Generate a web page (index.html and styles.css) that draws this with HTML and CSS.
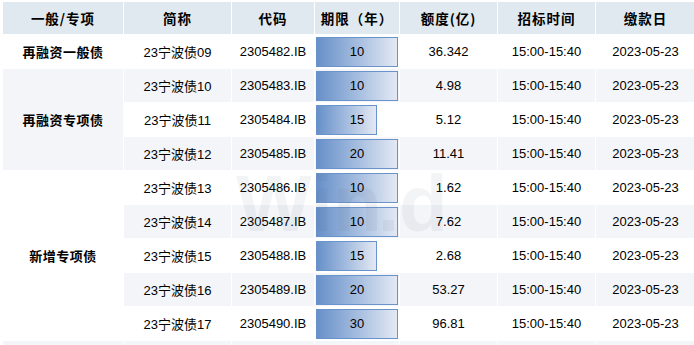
FILE: index.html
```html
<!DOCTYPE html>
<html lang="zh-CN">
<head>
<meta charset="utf-8">
<title>债券发行</title>
<link rel="stylesheet" href="styles.css">
</head>
<body>
<div class="wrap">
<table class="bonds">
  <colgroup>
    <col class="c1"><col class="c2"><col class="c3"><col class="c4"><col class="c5"><col class="c6"><col class="c7">
  </colgroup>
  <thead>
    <tr>
      <th>一般/专项</th><th>简称</th><th>代码</th><th>期限（年）</th><th>额度(亿)</th><th>招标时间</th><th>缴款日</th>
    </tr>
  </thead>
  <tbody>
    <tr class="w">
      <td class="cat">再融资一般债</td><td>23宁波债09</td><td>2305482.IB</td>
      <td class="term"><div class="tw"><div class="bar" style="width:100%"></div><span class="val">10</span></div></td>
      <td>36.342</td><td>15:00-15:40</td><td>2023-05-23</td>
    </tr>
    <tr class="g">
      <td class="cat" rowspan="3">再融资专项债</td><td>23宁波债10</td><td>2305483.IB</td>
      <td class="term"><div class="tw"><div class="bar" style="width:100%"></div><span class="val">10</span></div></td>
      <td>4.98</td><td>15:00-15:40</td><td>2023-05-23</td>
    </tr>
    <tr class="w">
      <td>23宁波债11</td><td>2305484.IB</td>
      <td class="term"><div class="tw"><div class="bar" style="width:74%"></div><span class="val">15</span></div></td>
      <td>5.12</td><td>15:00-15:40</td><td>2023-05-23</td>
    </tr>
    <tr class="g">
      <td>23宁波债12</td><td>2305485.IB</td>
      <td class="term"><div class="tw"><div class="bar" style="width:100%"></div><span class="val">20</span></div></td>
      <td>11.41</td><td>15:00-15:40</td><td>2023-05-23</td>
    </tr>
    <tr class="w">
      <td class="cat" rowspan="5">新增专项债</td><td>23宁波债13</td><td>2305486.IB</td>
      <td class="term"><div class="tw"><div class="bar" style="width:100%"></div><span class="val">10</span></div></td>
      <td>1.62</td><td>15:00-15:40</td><td>2023-05-23</td>
    </tr>
    <tr class="g">
      <td>23宁波债14</td><td>2305487.IB</td>
      <td class="term"><div class="tw"><div class="bar" style="width:100%"></div><span class="val">10</span></div></td>
      <td>7.62</td><td>15:00-15:40</td><td>2023-05-23</td>
    </tr>
    <tr class="w">
      <td>23宁波债15</td><td>2305488.IB</td>
      <td class="term"><div class="tw"><div class="bar" style="width:74%"></div><span class="val">15</span></div></td>
      <td>2.68</td><td>15:00-15:40</td><td>2023-05-23</td>
    </tr>
    <tr class="g">
      <td>23宁波债16</td><td>2305489.IB</td>
      <td class="term"><div class="tw"><div class="bar" style="width:100%"></div><span class="val">20</span></div></td>
      <td>53.27</td><td>15:00-15:40</td><td>2023-05-23</td>
    </tr>
    <tr class="w">
      <td>23宁波债17</td><td>2305490.IB</td>
      <td class="term"><div class="tw"><div class="bar" style="width:100%"></div><span class="val">30</span></div></td>
      <td>96.81</td><td>15:00-15:40</td><td>2023-05-23</td>
    </tr>
    <tr class="g tail"><td></td><td></td><td></td><td></td><td></td><td></td><td></td></tr>
  </tbody>
</table>
<div class="mark">Win<span class="dot"></span>d</div>
</div>
</body>
</html>
```
FILE: styles.css
```css
html, body {
  margin: 0;
  padding: 0;
  background: #ffffff;
}
body {
  font-family: "Liberation Sans", "Noto Sans CJK SC", sans-serif;
  color: #000;
  overflow: hidden;
}
.wrap {
  position: relative;
  padding: 2px 0 0 2px;
}
.bonds {
  border-collapse: collapse;
  table-layout: fixed;
  width: 693px;
}
.c1 { width: 121px; }
.c2 { width: 108px; }
.c3 { width: 83px; }
.c4 { width: 85px; }
.c5 { width: 98px; }
.c6 { width: 98px; }
.c7 { width: 100px; }
.bonds th,
.bonds td {
  border: 1px solid #ffffff;
  padding: 0;
  text-align: center;
  vertical-align: middle;
  white-space: nowrap;
}
.bonds th {
  background: #e0e9ef;
  height: 32px;
  font-family: "Noto Sans CJK SC", "Liberation Sans", sans-serif;
  font-weight: 700;
  font-size: 13.5px;
  letter-spacing: 1px;
  border-top: 0;
}
.bonds td {
  height: 33px;
  font-size: 13px;
}
.bonds tr.g td { background: #f3f5f8; }
.bonds tr.w td { background: #ffffff; }
.bonds td.cat {
  font-family: "Noto Sans CJK SC", "Liberation Sans", sans-serif;
  font-weight: 700;
  font-size: 13px;
  letter-spacing: 0.5px;
}
.bonds tr.g td.cat { background: #f3f5f8; }
.bonds td.term {
  padding: 0 1px 0 1px;
}
.tw {
  display: grid;
  height: 30px;
}
.bar {
  grid-area: 1 / 1;
  box-sizing: border-box;
  height: 30px;
  border: 1px solid #6b93cb;
  background: linear-gradient(to right, #6790c9 0%, #a4bcdf 50%, #e3e9f3 100%);
}
.val {
  grid-area: 1 / 1;
  justify-self: center;
  align-self: center;
  position: relative;
}
.bonds tr.tail td { height: 8px; }
.mark {
  position: absolute;
  left: 236px;
  top: 164px;
  font-family: "Liberation Sans", sans-serif;
  font-weight: 700;
  font-size: 80px;
  letter-spacing: 0;
  color: rgba(90, 100, 110, 0.07);
  pointer-events: none;
  line-height: 1;
}
.mark .dot {
  display: inline-block;
  width: 11px;
  height: 11px;
  background: rgba(90, 100, 110, 0.07);
  margin: 0 5px 0 1px;
}
```
